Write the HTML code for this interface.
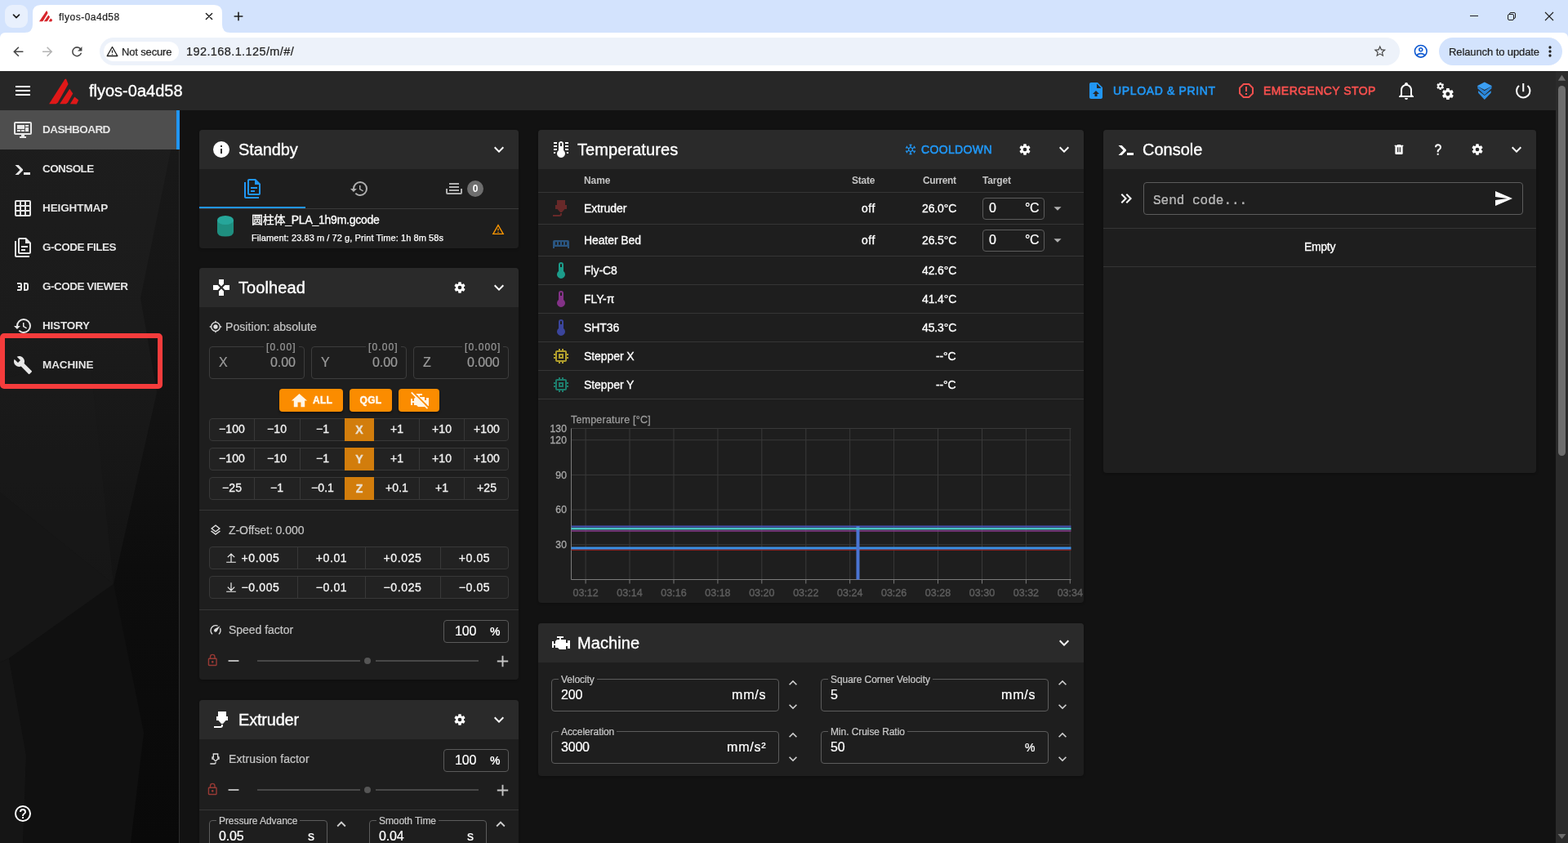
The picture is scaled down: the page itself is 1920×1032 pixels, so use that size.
<!DOCTYPE html>
<html lang="en"><head><meta charset="utf-8"><title>flyos-0a4d58</title>
<style>
*{box-sizing:border-box;margin:0;padding:0}
html,body{width:1920px;height:1032px;overflow:hidden;background:#121212}
body{font-family:"Liberation Sans","Noto Sans CJK SC",sans-serif;-webkit-font-smoothing:antialiased}
#root{position:relative;width:1920px;height:1032px;overflow:hidden;background:#121212}
.t{position:absolute;white-space:nowrap;will-change:transform}
.b{position:absolute}
.ic{position:absolute;display:block}
svg.abs{position:absolute;display:block;overflow:visible}

</style></head>
<body>
<div id="root">
<div class="b" style="left:0px;top:0px;width:1920px;height:50px;background:#d3e3fd"></div>
<div class="b" style="left:0px;top:40px;width:1920px;height:47px;background:#fff;border-radius:6px 6px 0 0"></div>
<div class="b" style="left:6px;top:6px;width:28px;height:28px;background:#e8f0fd;border-radius:9px"></div>
<svg class="abs" style="left:14px;top:14px" width="12" height="12" viewBox="0 0 12 12"><path d="M2.5 4.2 L6 7.7 L9.5 4.2" fill="none" stroke="#1f1f1f" stroke-width="1.7" stroke-linecap="round" stroke-linejoin="round"/></svg>
<svg class="abs" style="left:30px;top:6px" width="252" height="34" viewBox="0 0 252 34"><path d="M0 34 Q10 34 10 24 V10 Q10 0 20 0 H232 Q242 0 242 10 V24 Q242 34 252 34 Z" fill="#fff"/></svg>
<svg class="abs" style="left:48px;top:13.2px" width="16.2" height="13.6" viewBox="0 0 36.2 32" preserveAspectRatio="none"><g fill="#d7262c"><path d="M0.1 31.2 L19.4 1.1 L21 0.4 L23.6 7 L10.9 29.4 L8.6 31.3 Z"/><path d="M13.1 31.2 L25.3 12.8 L29.3 18.4 L23.1 29.4 L21 31.3 Z"/><path d="M25.9 31.2 L31.3 22.4 L36.2 26.5 L33.9 31.6 Z"/></g></svg>
<div class="t" style="top:11.7px;font-size:12px;line-height:18px;color:#1f1f1f;-webkit-text-stroke:0.22px #1f1f1f;letter-spacing:0.5px;font-family:'Liberation Sans',sans-serif;left:72px;">flyos-0a4d58</div>
<svg class="abs" style="left:250px;top:14px" width="12" height="12" viewBox="0 0 12 12"><path d="M2.4 2.4 L9.6 9.6 M9.6 2.4 L2.4 9.6" stroke="#1f1f1f" stroke-width="1.4" stroke-linecap="round"/></svg>
<svg class="abs" style="left:285px;top:13px" width="14" height="14" viewBox="0 0 14 14"><path d="M7 2.2 V11.8 M2.2 7 H11.8" stroke="#1f1f1f" stroke-width="1.6" stroke-linecap="round"/></svg>
<svg class="abs" style="left:1799px;top:13px" width="12" height="12" viewBox="0 0 12 12"><path d="M1 6.5 H11" stroke="#1f1f1f" stroke-width="1"/></svg>
<svg class="abs" style="left:1845px;top:14px" width="12" height="12" viewBox="0 0 12 12"><rect x="1.5" y="3.5" width="7" height="7" rx="1.5" fill="none" stroke="#1f1f1f" stroke-width="1"/><path d="M3.5 3.5 V3 Q3.5 1.5 5 1.5 H9 Q10.5 1.5 10.5 3 V7 Q10.5 8.5 9 8.5 H8.5" fill="none" stroke="#1f1f1f" stroke-width="1"/></svg>
<svg class="abs" style="left:1891px;top:14px" width="12" height="12" viewBox="0 0 12 12"><path d="M1 1 L11 11 M11 1 L1 11" stroke="#1f1f1f" stroke-width="1.1"/></svg>
<svg class="ic" style="left:12.75px;top:53.75px;width:18.5px;height:18.5px;" viewBox="0 0 24 24"><path fill="#474747" d="M20,11V13H8L13.5,18.5L12.08,19.92L4.16,12L12.08,4.08L13.5,5.5L8,11H20Z"/></svg>
<svg class="ic" style="left:48.75px;top:53.75px;width:18.5px;height:18.5px;" viewBox="0 0 24 24"><path fill="#b4b4b4" d="M4,11V13H16L10.5,18.5L11.92,19.92L19.84,12L11.92,4.08L10.5,5.5L16,11H4Z"/></svg>
<svg class="ic" style="left:84.75px;top:53.75px;width:18.5px;height:18.5px;" viewBox="0 0 24 24"><path fill="#474747" d="M17.65,6.35C16.2,4.9 14.21,4 12,4A8,8 0 0,0 4,12A8,8 0 0,0 12,20C15.73,20 18.84,17.45 19.73,14H17.65C16.83,16.33 14.61,18 12,18A6,6 0 0,1 6,12A6,6 0 0,1 12,6C13.66,6 15.14,6.69 16.22,7.78L13,11H20V4L17.65,6.35Z"/></svg>
<div class="b" style="left:122px;top:46px;width:1592px;height:34px;background:#edf2fa;border-radius:17px"></div>
<div class="b" style="left:127px;top:51px;width:92px;height:24px;background:#fff;border-radius:12px"></div>
<svg class="abs" style="left:130px;top:56px" width="15" height="14" viewBox="0 0 15 14"><path d="M7.5 1.5 L13.8 12.5 H1.2 Z" fill="none" stroke="#1f1f1f" stroke-width="1.3" stroke-linejoin="round"/><path d="M7.5 5.5 V8.8 M7.5 10.2 V11.3" stroke="#1f1f1f" stroke-width="1.3"/></svg>
<div class="t" style="top:54px;font-size:13px;line-height:20px;color:#1f1f1f;-webkit-text-stroke:0.22px #1f1f1f;letter-spacing:-0.15px;font-family:'Liberation Sans',sans-serif;left:149px;">Not secure</div>
<div class="t" style="top:52px;font-size:14.5px;line-height:22px;color:#1f1f1f;-webkit-text-stroke:0.22px #1f1f1f;letter-spacing:0.4px;font-family:'Liberation Sans',sans-serif;left:228px;">192.168.1.125/m/#/</div>
<svg class="ic" style="left:1681.25px;top:54.25px;width:17.5px;height:17.5px;" viewBox="0 0 24 24"><path fill="#474747" d="M12,15.39L8.24,17.66L9.23,13.38L5.91,10.5L10.29,10.13L12,6.09L13.71,10.13L18.09,10.5L14.77,13.38L15.76,17.66M22,9.24L14.81,8.63L12,2L9.19,8.63L2,9.24L7.45,13.97L5.82,21L12,17.27L18.18,21L16.54,13.97L22,9.24Z"/></svg>
<svg class="ic" style="left:1729.75px;top:53.05px;width:19.5px;height:19.5px;" viewBox="0 0 24 24"><path fill="#0b57d0" d="M12,2A10,10 0 0,0 2,12A10,10 0 0,0 12,22A10,10 0 0,0 22,12A10,10 0 0,0 12,2M7.07,18.28C7.5,17.38 10.12,16.5 12,16.5C13.88,16.5 16.5,17.38 16.93,18.28C15.57,19.36 13.86,20 12,20C10.14,20 8.43,19.36 7.07,18.28M18.36,16.83C16.93,15.09 13.46,14.5 12,14.5C10.54,14.5 7.07,15.09 5.64,16.83C4.62,15.5 4,13.82 4,12C4,7.59 7.59,4 12,4C16.41,4 20,7.59 20,12C20,13.82 19.38,15.5 18.36,16.83M12,6C10.06,6 8.5,7.56 8.5,9.5C8.5,11.44 10.06,13 12,13C13.94,13 15.5,11.44 15.5,9.5C15.5,7.56 13.94,6 12,6M12,11A1.5,1.5 0 0,1 10.5,9.5A1.5,1.5 0 0,1 12,8A1.5,1.5 0 0,1 13.5,9.5A1.5,1.5 0 0,1 12,11Z"/></svg>
<div class="b" style="left:1762px;top:46px;width:151px;height:34px;background:#d3e3fd;border-radius:17px"></div>
<div class="t" style="top:54px;font-size:13px;line-height:20px;color:#1f1f1f;-webkit-text-stroke:0.22px #1f1f1f;letter-spacing:-0.1px;font-family:'Liberation Sans',sans-serif;left:1774px;">Relaunch to update</div>
<svg class="ic" style="left:1888px;top:53px;width:20px;height:20px;" viewBox="0 0 24 24"><path fill="#1f1f1f" d="M12,16A2,2 0 0,1 14,18A2,2 0 0,1 12,20A2,2 0 0,1 10,18A2,2 0 0,1 12,16M12,10A2,2 0 0,1 14,12A2,2 0 0,1 12,14A2,2 0 0,1 10,12A2,2 0 0,1 12,10M12,4A2,2 0 0,1 14,6A2,2 0 0,1 12,8A2,2 0 0,1 10,6A2,2 0 0,1 12,4Z"/></svg>
<div class="b" style="left:0px;top:87px;width:1920px;height:48px;background:#272727"></div>
<svg class="ic" style="left:16px;top:99px;width:24px;height:24px;" viewBox="0 0 24 24"><path fill="#fff" d="M3,6H21V8H3V6M3,11H21V13H3V11M3,16H21V18H3V16Z"/></svg>
<svg class="abs" style="left:60px;top:95.6px" width="36.2" height="32" viewBox="0 0 36.2 32"><g fill="#e01818"><path d="M0.1 31.2 L19.4 1.1 L21 0.4 L23.6 7 L10.9 29.4 L8.6 31.3 Z"/><path d="M13.1 31.2 L25.3 12.8 L29.3 18.4 L23.1 29.4 L21 31.3 Z"/><path d="M25.9 31.2 L31.3 22.4 L36.2 26.5 L33.9 31.6 Z"/></g></svg>
<div class="t" style="top:96px;font-size:20px;line-height:30px;color:#fff;-webkit-text-stroke:0.35px #fff;left:109px;">flyos-0a4d58</div>
<svg class="ic" style="left:1330px;top:99px;width:24px;height:24px;" viewBox="0 0 24 24"><path fill="#2196f3" d="M14,2H6C4.89,2 4,2.89 4,4V20C4,21.11 4.89,22 6,22H18C19.11,22 20,21.11 20,20V8L14,2M13.5,16V19H10.5V16H8L12,12L16,16H13.5M13,9V3.5L18.5,9H13Z"/></svg>
<div class="t" style="top:100.5px;font-size:14px;line-height:21px;color:#2196f3;letter-spacing:0.64px;left:1362.5px;-webkit-text-stroke:.62px #2196f3;">UPLOAD &amp; PRINT</div>
<svg class="ic" style="left:1514px;top:99px;width:24px;height:24px;" viewBox="0 0 24 24"><path fill="#f5504e" d="M8.27,3L3,8.27V15.73L8.27,21H15.73C17.5,19.24 21,15.73 21,15.73V8.27L15.73,3M9.1,5H14.9L19,9.1V14.9L14.9,19H9.1L5,14.9V9.1M11,15H13V17H11V15M11,7H13V13H11V7"/></svg>
<div class="t" style="top:100.5px;font-size:14px;line-height:21px;color:#f5504e;letter-spacing:0.43px;left:1547px;-webkit-text-stroke:.62px #f5504e;">EMERGENCY STOP</div>
<svg class="ic" style="left:1710px;top:99px;width:24px;height:24px;" viewBox="0 0 24 24"><path fill="#fff" d="M10,21H14A2,2 0 0,1 12,23A2,2 0 0,1 10,21M21,19V20H3V19L5,17V11C5,7.9 7.03,5.17 10,4.29C10,4.19 10,4.1 10,4A2,2 0 0,1 12,2A2,2 0 0,1 14,4C14,4.1 14,4.19 14,4.29C16.97,5.17 19,7.9 19,11V17L21,19M17,11A5,5 0 0,0 12,6A5,5 0 0,0 7,11V18H17V11Z"/></svg>
<svg class="ic" style="left:1757px;top:99px;width:24px;height:24px;" viewBox="0 0 24 24"><path fill="#fff" d="M15.9,18.45C17.25,18.45 18.35,17.35 18.35,16C18.35,14.65 17.25,13.55 15.9,13.55C14.54,13.55 13.45,14.65 13.45,16C13.45,17.35 14.54,18.45 15.9,18.45M21.1,16.68L22.58,17.84C22.71,17.95 22.75,18.13 22.66,18.29L21.26,20.71C21.17,20.86 21,20.92 20.83,20.86L19.09,20.16C18.73,20.44 18.33,20.67 17.91,20.85L17.64,22.7C17.62,22.87 17.47,23 17.3,23H14.5C14.32,23 14.18,22.87 14.15,22.7L13.89,20.85C13.46,20.67 13.07,20.44 12.71,20.16L10.96,20.86C10.81,20.92 10.62,20.86 10.54,20.71L9.14,18.29C9.05,18.13 9.09,17.95 9.22,17.84L10.7,16.68L10.65,16L10.7,15.31L9.22,14.16C9.09,14.05 9.05,13.86 9.14,13.71L10.54,11.29C10.62,11.13 10.81,11.07 10.96,11.13L12.71,11.84C13.07,11.56 13.46,11.32 13.89,11.15L14.15,9.29C14.18,9.13 14.32,9 14.5,9H17.3C17.47,9 17.62,9.13 17.64,9.29L17.91,11.15C18.33,11.32 18.73,11.56 19.09,11.84L20.83,11.13C21,11.07 21.17,11.13 21.26,11.29L22.66,13.71C22.75,13.86 22.71,14.05 22.58,14.16L21.1,15.31L21.15,16L21.1,16.68M6.69,8.07C7.56,8.07 8.26,7.37 8.26,6.5C8.26,5.63 7.56,4.92 6.69,4.92A1.58,1.58 0 0,0 5.11,6.5C5.11,7.37 5.82,8.07 6.69,8.07M10.03,6.94L11,7.68C11.07,7.75 11.09,7.87 11.03,7.97L10.13,9.53C10.08,9.63 9.96,9.67 9.86,9.63L8.74,9.18L8,9.62L7.81,10.81C7.79,10.92 7.7,11 7.59,11H5.79C5.67,11 5.58,10.92 5.56,10.81L5.4,9.62L4.64,9.18L3.5,9.63C3.41,9.67 3.3,9.63 3.24,9.53L2.34,7.97C2.28,7.87 2.31,7.75 2.39,7.68L3.34,6.94L3.31,6.5L3.34,6.06L2.39,5.32C2.31,5.25 2.28,5.13 2.34,5.03L3.24,3.47C3.3,3.37 3.41,3.33 3.5,3.37L4.63,3.82L5.4,3.38L5.56,2.19C5.58,2.08 5.67,2 5.79,2H7.59C7.7,2 7.79,2.08 7.81,2.19L8,3.38L8.74,3.82L9.86,3.37C9.96,3.33 10.08,3.37 10.13,3.47L11.03,5.03C11.09,5.13 11.07,5.25 11,5.32L10.03,6.06L10.06,6.5L10.03,6.94Z"/></svg>
<svg class="abs" style="left:1806px;top:98px" width="24" height="26" viewBox="1806 98 24 26"><path d="M1810.1 113.7 L1817.8 121.9 L1825.7 113.7 L1825.7 111 L1817.8 117 L1810.1 111 Z" fill="#2f90e4"/><path d="M1809.3 108.2 L1817.8 116.2 L1826.5 108.2 L1826.5 105.5 L1817.8 111.3 L1809.3 105.5 Z" fill="#2a85d8"/><path d="M1817.8 100.5 L1827 105.3 L1817.8 110.1 L1808.7 105.3 Z" fill="#3b9ff4"/></svg>
<svg class="ic" style="left:1852.75px;top:98.95px;width:24.5px;height:24.5px;" viewBox="0 0 24 24"><path fill="#fff" d="M13,3H11V13H13V3M17.83,5.17L16.41,6.59C17.96,7.85 19,9.83 19,12A7,7 0 0,1 12,19C8.14,19 5,15.86 5,12C5,9.83 5.96,7.85 7.58,6.58L6.17,5.17C4.23,6.82 3,9.26 3,12A9,9 0 0,0 12,21A9,9 0 0,0 21,12C21,9.26 19.77,6.82 17.83,5.17Z"/></svg>
<div class="b" style="left:0px;top:135px;width:220px;height:897px;background:linear-gradient(180deg,#1d1d1d 0%,#1b1b1b 30%,#151515 55%,#111 75%,#0f0f0f 100%);border-right:1px solid #2e2e2e"></div>
<svg class="abs" style="left:0;top:135px" width="219" height="897" viewBox="0 0 219 897"><linearGradient id="sbg" x1="0" y1="0" x2="0" y2="1"><stop offset="0" stop-color="#191919"/><stop offset=".3" stop-color="#151515"/><stop offset=".62" stop-color="#0d0d0d"/><stop offset="1" stop-color="#090909"/></linearGradient><path d="M0 330 L110 300 L139 580 L0 468 Z" fill="#1b1b1b" opacity=".4"/><path d="M0 468 L139 580 L11 671 L0 676 Z" fill="#161616"/><path d="M11 671 L139 580 L176 762 L160 897 L28 897 L32 790 Z" fill="#101010"/><path d="M219 0 L172 230 L192 345 L139 580 L176 762 L160 897 L219 897 Z" fill="url(#sbg)"/><path d="M0 676 L11 671 L32 790 L28 897 L0 897 Z" fill="#151515"/></svg>
<div class="b" style="left:0px;top:135px;width:216px;height:48px;background:#4e4e4e"></div>
<div class="b" style="left:216px;top:135px;width:4px;height:48px;background:#2196f3"></div>
<svg class="ic" style="left:16px;top:147px;width:24px;height:24px;" viewBox="0 0 24 24"><path fill="#e6e6e6" d="M21,16V4H3V16H21M21,2A2,2 0 0,1 23,4V16A2,2 0 0,1 21,18H14V20H16V22H8V20H10V18H3C1.89,18 1,17.1 1,16V4C1,2.89 1.89,2 3,2H21M5,6H14V11H5V6M15,6H19V8H15V6M19,9V14H15V9H19M5,12H9V14H5V12M10,12H14V14H10V12Z"/></svg>
<div class="t" style="top:149px;font-size:13.5px;line-height:20px;color:#e4e4e4;font-weight:700;letter-spacing:-0.55px;left:52px;">DASHBOARD</div>
<svg class="ic" style="left:16px;top:195px;width:24px;height:24px;" viewBox="0 0 24 24"><path fill="#e6e6e6" d="M13,19V16H21V19H13M8.5,13L2.47,7H6.71L11.67,11.95C12.25,12.54 12.25,13.5 11.67,14.07L6.74,19H2.5L8.5,13Z"/></svg>
<div class="t" style="top:197px;font-size:13.5px;line-height:20px;color:#e4e4e4;font-weight:700;letter-spacing:-0.58px;left:52px;">CONSOLE</div>
<svg class="ic" style="left:16px;top:243px;width:24px;height:24px;" viewBox="0 0 24 24"><path fill="#e6e6e6" d="M10,4V8H14V4H10M16,4V8H20V4H16M16,10V14H20V10H16M16,16V20H20V16H16M14,20V16H10V20H14M8,20V16H4V20H8M8,14V10H4V14H8M8,8V4H4V8H8M10,14H14V10H10V14M4,2H20A2,2 0 0,1 22,4V20A2,2 0 0,1 20,22H4C2.92,22 2,21.1 2,20V4A2,2 0 0,1 4,2Z"/></svg>
<div class="t" style="top:245px;font-size:13.5px;line-height:20px;color:#e4e4e4;font-weight:700;letter-spacing:-0.1px;left:52px;">HEIGHTMAP</div>
<svg class="ic" style="left:16px;top:291px;width:24px;height:24px;" viewBox="0 0 24 24"><path fill="#e6e6e6" d="M16,0H8C6.9,0 6,0.9 6,2V18C6,19.1 6.9,20 8,20H20C21.1,20 22,19.1 22,18V6L16,0M20,18H8V2H15V7H20V18M4,4V22H20V24H4C2.9,24 2,23.1 2,22V4H4M10,10V12H18V10H10M10,14V16H15V14H10Z"/></svg>
<div class="t" style="top:293px;font-size:13.5px;line-height:20px;color:#e4e4e4;font-weight:700;letter-spacing:-0.5px;left:52px;">G-CODE FILES</div>
<svg class="ic" style="left:16px;top:339px;width:24px;height:24px;" viewBox="0 0 24 24"><path fill="#e6e6e6" d="M5,7H9A2,2 0 0,1 11,9V15A2,2 0 0,1 9,17H5V15H9V13H6V11H9V9H5V7M13,7H16A3,3 0 0,1 19,10V14A3,3 0 0,1 16,17H13V7M16,15A1,1 0 0,0 17,14V10A1,1 0 0,0 16,9H15V15H16Z"/></svg>
<div class="t" style="top:341px;font-size:13.5px;line-height:20px;color:#e4e4e4;font-weight:700;letter-spacing:-0.5px;left:52px;">G-CODE VIEWER</div>
<svg class="ic" style="left:16px;top:387px;width:24px;height:24px;" viewBox="0 0 24 24"><path fill="#e6e6e6" d="M13.5,8H12V13L16.28,15.54L17,14.33L13.5,12.25V8M13,3A9,9 0 0,0 4,12H1L4.96,16.03L9,12H6A7,7 0 0,1 13,5A7,7 0 0,1 20,12A7,7 0 0,1 13,19C11.07,19 9.32,18.21 8.06,16.94L6.64,18.36C8.27,20 10.5,21 13,21A9,9 0 0,0 22,12A9,9 0 0,0 13,3"/></svg>
<div class="t" style="top:389px;font-size:13.5px;line-height:20px;color:#e4e4e4;font-weight:700;letter-spacing:-0.2px;left:52px;">HISTORY</div>
<svg class="ic" style="left:16px;top:435px;width:24px;height:24px;" viewBox="0 0 24 24"><path fill="#e6e6e6" d="M22.7,19L13.6,9.9C14.5,7.6 14,4.9 12.1,3C10.1,1 7.1,0.6 4.7,1.7L9,6L6,9L1.6,4.7C0.4,7.1 0.9,10.1 2.9,12.1C4.8,14 7.5,14.5 9.8,13.6L18.9,22.7C19.3,23.1 19.9,23.1 20.3,22.7L22.6,20.4C23.1,20 23.1,19.3 22.7,19Z"/></svg>
<div class="t" style="top:437px;font-size:13.5px;line-height:20px;color:#e4e4e4;font-weight:700;letter-spacing:-0.1px;left:52px;">MACHINE</div>
<div class="b" style="left:0px;top:408px;width:199px;height:68px;border:6px solid #f53c3c;border-radius:5px"></div>
<svg class="ic" style="left:16px;top:984px;width:24px;height:24px;" viewBox="0 0 24 24"><path fill="#fff" d="M11,18H13V16H11V18M12,2A10,10 0 0,0 2,12A10,10 0 0,0 12,22A10,10 0 0,0 22,12A10,10 0 0,0 12,2M12,20C7.59,20 4,16.41 4,12C4,7.59 7.59,4 12,4C16.41,4 20,7.59 20,12C20,16.41 16.41,20 12,20M12,6A4,4 0 0,0 8,10H10A2,2 0 0,1 12,8A2,2 0 0,1 14,10C14,12 11,11.75 11,15H13C13,12.75 16,12.5 16,10A4,4 0 0,0 12,6Z"/></svg>
<div class="b" style="left:1905px;top:87px;width:15px;height:945px;background:#2b2b2b"></div>
<svg class="abs" style="left:1907px;top:91px" width="11" height="8" viewBox="0 0 11 8"><path d="M5.5 0.8 L10.2 7.8 H0.8 Z" fill="#6d6d6d"/></svg>
<div class="b" style="left:1908px;top:105px;width:9px;height:453px;background:#6d6d6d;border-radius:5px"></div>
<svg class="abs" style="left:1907px;top:1020px" width="11" height="8" viewBox="0 0 11 8"><path d="M5.5 7 L10.5 1 H0.5 Z" fill="#6b6b6b"/></svg>
<div class="b" style="left:244px;top:159px;width:391px;height:145px;background:#1e1e1e;border-radius:4px;box-shadow:0 1px 3px rgba(0,0,0,.28)"></div>
<div class="b" style="left:244px;top:159px;width:391px;height:48px;background:#2a2a2a;border-radius:4px 4px 0 0"></div>
<svg class="ic" style="left:259px;top:171px;width:24px;height:24px;" viewBox="0 0 24 24"><path fill="#fff" d="M13,9H11V7H13M13,17H11V11H13M12,2A10,10 0 0,0 2,12A10,10 0 0,0 12,22A10,10 0 0,0 22,12A10,10 0 0,0 12,2Z"/></svg>
<div class="t" style="top:168px;font-size:20px;line-height:30px;color:#fff;-webkit-text-stroke:0.35px #fff;letter-spacing:-0.1px;left:292px;">Standby</div>
<svg class="ic" style="left:599px;top:171px;width:24px;height:24px;" viewBox="0 0 24 24"><path fill="#fff" d="M7.41,8.58L12,13.17L16.59,8.58L18,10L12,16L6,10L7.41,8.58Z"/></svg>
<svg class="ic" style="left:297px;top:219px;width:24px;height:24px;" viewBox="0 0 24 24"><path fill="#2196f3" d="M16,0H8C6.9,0 6,0.9 6,2V18C6,19.1 6.9,20 8,20H20C21.1,20 22,19.1 22,18V6L16,0M20,18H8V2H15V7H20V18M4,4V22H20V24H4C2.9,24 2,23.1 2,22V4H4M10,10V12H18V10H10M10,14V16H15V14H10Z"/></svg>
<svg class="ic" style="left:428px;top:219px;width:24px;height:24px;" viewBox="0 0 24 24"><path fill="#b0b0b0" d="M13.5,8H12V13L16.28,15.54L17,14.33L13.5,12.25V8M13,3A9,9 0 0,0 4,12H1L4.96,16.03L9,12H6A7,7 0 0,1 13,5A7,7 0 0,1 20,12A7,7 0 0,1 13,19C11.07,19 9.32,18.21 8.06,16.94L6.64,18.36C8.27,20 10.5,21 13,21A9,9 0 0,0 22,12A9,9 0 0,0 13,3"/></svg>
<svg class="ic" style="left:544px;top:219px;width:24px;height:24px;" viewBox="0 0 24 24"><path fill="#b0b0b0" d="M18 5H6V7H18V5M6 9H18V11H6V9M2 12H4V17H20V12H22V17A2 2 0 0 1 20 19H4A2 2 0 0 1 2 17V12M18 13H6V15H18V13Z"/></svg>
<div class="b" style="left:571.5px;top:221px;width:20px;height:20px;background:#6e6e6e;border-radius:10px"></div>
<div class="t" style="top:222px;font-size:12px;line-height:18px;color:#fff;font-weight:700;left:571.5px;width:20px;text-align:center;">0</div>
<div class="b" style="left:244px;top:255px;width:391px;height:1px;background:#3a3a3a"></div>
<div class="b" style="left:244px;top:253px;width:130px;height:2px;background:#2196f3"></div>
<svg class="abs" style="left:266px;top:263px" width="20" height="28" viewBox="0 0 20 28"><path d="M0 6 V21 Q0 26.5 10 26.5 Q20 26.5 20 21 V6 Z" fill="#1f8f80"/><ellipse cx="10" cy="6.5" rx="10" ry="5.5" fill="#26a69a"/></svg>
<div class="t" style="top:258.5px;font-size:14px;line-height:21px;color:#fff;letter-spacing:-0.25px;left:308px;-webkit-text-stroke:.3px #fff;">圆柱体_PLA_1h9m.gcode</div>
<div class="t" style="top:283px;font-size:11px;line-height:16px;color:#fff;letter-spacing:0.07px;left:308px;-webkit-text-stroke:.25px #fff;">Filament: 23.83 m / 72 g, Print Time: 1h 8m 58s</div>
<svg class="ic" style="left:602px;top:273px;width:16px;height:16px;" viewBox="0 0 24 24"><path fill="#ff9800" d="M12,2L1,21H23M12,6L19.53,19H4.47M11,10V14H13V10M11,16V18H13V16"/></svg>
<div class="b" style="left:244px;top:328px;width:391px;height:504px;background:#1e1e1e;border-radius:4px;box-shadow:0 1px 3px rgba(0,0,0,.28)"></div>
<div class="b" style="left:244px;top:328px;width:391px;height:48px;background:#2a2a2a;border-radius:4px 4px 0 0"></div>
<svg class="ic" style="left:259px;top:340px;width:24px;height:24px;" viewBox="0 0 24 24"><path fill="#fff" d="M16.5,9L13.5,12L16.5,15H22V9M9,16.5V22H15V16.5L12,13.5M7.5,9H2V15H7.5L10.5,12M15,7.5V2H9V7.5L12,10.5L15,7.5Z"/></svg>
<div class="t" style="top:337px;font-size:20px;line-height:30px;color:#fff;-webkit-text-stroke:0.35px #fff;letter-spacing:0.1px;left:292px;">Toolhead</div>
<svg class="ic" style="left:555px;top:344px;width:16px;height:16px;" viewBox="0 0 24 24"><path fill="#fff" d="M12,15.5A3.5,3.5 0 0,1 8.5,12A3.5,3.5 0 0,1 12,8.5A3.5,3.5 0 0,1 15.5,12A3.5,3.5 0 0,1 12,15.5M19.43,12.97C19.47,12.65 19.5,12.33 19.5,12C19.5,11.67 19.47,11.34 19.43,11L21.54,9.37C21.73,9.22 21.78,8.95 21.66,8.73L19.66,5.27C19.54,5.05 19.27,4.96 19.05,5.05L16.56,6.05C16.04,5.66 15.5,5.32 14.87,5.07L14.5,2.42C14.46,2.18 14.25,2 14,2H10C9.75,2 9.54,2.18 9.5,2.42L9.13,5.07C8.5,5.32 7.96,5.66 7.44,6.05L4.95,5.05C4.73,4.96 4.46,5.05 4.34,5.27L2.34,8.73C2.21,8.95 2.27,9.22 2.46,9.37L4.57,11C4.53,11.34 4.5,11.67 4.5,12C4.5,12.33 4.53,12.65 4.57,12.97L2.46,14.63C2.27,14.78 2.21,15.05 2.34,15.27L4.34,18.73C4.46,18.95 4.73,19.03 4.95,18.95L7.44,17.94C7.96,18.34 8.5,18.68 9.13,18.93L9.5,21.58C9.54,21.82 9.75,22 10,22H14C14.25,22 14.46,21.82 14.5,21.58L14.87,18.93C15.5,18.67 16.04,18.34 16.56,17.94L19.05,18.95C19.27,19.03 19.54,18.95 19.66,18.73L21.66,15.27C21.78,15.05 21.73,14.78 21.54,14.63L19.43,12.97Z"/></svg>
<svg class="ic" style="left:599px;top:340px;width:24px;height:24px;" viewBox="0 0 24 24"><path fill="#fff" d="M7.41,8.58L12,13.17L16.59,8.58L18,10L12,16L6,10L7.41,8.58Z"/></svg>
<svg class="ic" style="left:256px;top:392.3px;width:16px;height:16px;" viewBox="0 0 24 24"><path fill="#e0e0e0" d="M12,8A4,4 0 0,1 16,12A4,4 0 0,1 12,16A4,4 0 0,1 8,12A4,4 0 0,1 12,8M3.05,13H1V11H3.05C3.5,6.83 6.83,3.5 11,3.05V1H13V3.05C17.17,3.5 20.5,6.83 20.95,11H23V13H20.95C20.5,17.17 17.17,20.5 13,20.95V23H11V20.95C6.83,20.5 3.5,17.17 3.05,13M12,5A7,7 0 0,0 5,12A7,7 0 0,0 12,19A7,7 0 0,0 19,12A7,7 0 0,0 12,5Z"/></svg>
<div class="t" style="top:389.5px;font-size:14px;line-height:21px;color:#c4c4c4;-webkit-text-stroke:0.22px #c4c4c4;letter-spacing:0.08px;left:276px;">Position: absolute</div>
<div class="b" style="left:256px;top:424px;width:117px;height:40px;border:1px solid #3d3d3d;border-radius:4px"></div>
<div class="t" style="top:431.8px;font-size:16px;line-height:24px;color:#9a9a9a;-webkit-text-stroke:0.22px #9a9a9a;left:268px;">X</div>
<div class="t" style="top:432px;font-size:16px;line-height:24px;color:#9a9a9a;-webkit-text-stroke:0.22px #9a9a9a;letter-spacing:-0.1px;right:1558.5px;">0.00</div>
<div class="t" style="top:417.5px;font-size:12px;line-height:14px;color:#9a9a9a;-webkit-text-stroke:0.22px #9a9a9a;letter-spacing:1.1px;right:1554px;background:#1e1e1e;padding:0 3px;">[0.00]</div>
<div class="b" style="left:381px;top:424px;width:117px;height:40px;border:1px solid #3d3d3d;border-radius:4px"></div>
<div class="t" style="top:431.8px;font-size:16px;line-height:24px;color:#9a9a9a;-webkit-text-stroke:0.22px #9a9a9a;left:393px;">Y</div>
<div class="t" style="top:432px;font-size:16px;line-height:24px;color:#9a9a9a;-webkit-text-stroke:0.22px #9a9a9a;letter-spacing:-0.1px;right:1433.5px;">0.00</div>
<div class="t" style="top:417.5px;font-size:12px;line-height:14px;color:#9a9a9a;-webkit-text-stroke:0.22px #9a9a9a;letter-spacing:1.1px;right:1429px;background:#1e1e1e;padding:0 3px;">[0.00]</div>
<div class="b" style="left:506px;top:424px;width:117px;height:40px;border:1px solid #3d3d3d;border-radius:4px"></div>
<div class="t" style="top:431.8px;font-size:16px;line-height:24px;color:#9a9a9a;-webkit-text-stroke:0.22px #9a9a9a;left:518px;">Z</div>
<div class="t" style="top:432px;font-size:16px;line-height:24px;color:#9a9a9a;-webkit-text-stroke:0.22px #9a9a9a;letter-spacing:-0.1px;right:1308.5px;">0.000</div>
<div class="t" style="top:417.5px;font-size:12px;line-height:14px;color:#9a9a9a;-webkit-text-stroke:0.22px #9a9a9a;letter-spacing:1.1px;right:1304px;background:#1e1e1e;padding:0 3px;">[0.000]</div>
<div class="b" style="left:342px;top:476px;width:78px;height:28px;background:#fb8c00;border-radius:4px;box-shadow:0 2px 3px rgba(0,0,0,.4)"></div>
<svg class="ic" style="left:354.5px;top:478.5px;width:23px;height:23px;" viewBox="0 0 24 24"><path fill="#fff5e6" d="M10,20V14H14V20H19V12H22L12,3L2,12H5V20H10Z"/></svg>
<div class="t" style="top:481px;font-size:12px;line-height:18px;color:#fff8ee;font-weight:700;letter-spacing:0.3px;left:383px;-webkit-text-stroke:.4px #fff8ee;">ALL</div>
<div class="b" style="left:428px;top:476px;width:52px;height:28px;background:#fb8c00;border-radius:4px;box-shadow:0 2px 3px rgba(0,0,0,.4)"></div>
<div class="t" style="top:481px;font-size:12px;line-height:18px;color:#fff8ee;font-weight:700;letter-spacing:0.3px;left:428px;width:52px;text-align:center;-webkit-text-stroke:.4px #fff8ee;">QGL</div>
<div class="b" style="left:488px;top:476px;width:50px;height:28px;background:#fb8c00;border-radius:4px;box-shadow:0 2px 3px rgba(0,0,0,.4)"></div>
<svg class="abs" style="left:501.6px;top:478.4px" width="24" height="24" viewBox="0 0 24 24"><path fill="#fff5e6" d="M7,4V6H10V8H7L5,10V13H3V10H1V18H3V15H5V18H8L10,20H18V16H20V19H23V9H20V12H18V8H12V6H15V4H7Z"/><path d="M3.05 1.1 L22.8 20.85" stroke="#fb8c00" stroke-width="1.9"/><path d="M1.75 2.37 L21.5 22.1" stroke="#fff5e6" stroke-width="1.8"/></svg>
<div class="b" style="left:256px;top:512px;width:367px;height:28px;border:1px solid #383838;border-radius:4px;background:#222"></div>
<div class="b" style="left:422px;top:512px;width:36px;height:28px;background:#d27d0c"></div>
<div class="t" style="top:516px;font-size:14px;line-height:21px;color:#eadfcf;font-weight:700;left:422px;width:36px;text-align:center;-webkit-text-stroke:.4px #eadfcf;">X</div>
<div class="t" style="top:514.9px;font-size:14px;line-height:21px;color:#ececec;letter-spacing:0.1px;left:255.5px;width:56px;text-align:center;-webkit-text-stroke:.3px #fff;">−100</div>
<div class="t" style="top:514.9px;font-size:14px;line-height:21px;color:#ececec;letter-spacing:0.1px;left:311px;width:56px;text-align:center;-webkit-text-stroke:.3px #fff;">−10</div>
<div class="b" style="left:311px;top:513px;width:1px;height:26px;background:#383838"></div>
<div class="t" style="top:514.9px;font-size:14px;line-height:21px;color:#ececec;letter-spacing:0.1px;left:366.5px;width:56px;text-align:center;-webkit-text-stroke:.3px #fff;">−1</div>
<div class="b" style="left:367px;top:513px;width:1px;height:26px;background:#383838"></div>
<div class="t" style="top:514.9px;font-size:14px;line-height:21px;color:#ececec;letter-spacing:0.1px;left:457.5px;width:56px;text-align:center;-webkit-text-stroke:.3px #fff;">+1</div>
<div class="t" style="top:514.9px;font-size:14px;line-height:21px;color:#ececec;letter-spacing:0.1px;left:512.5px;width:56px;text-align:center;-webkit-text-stroke:.3px #fff;">+10</div>
<div class="b" style="left:513px;top:513px;width:1px;height:26px;background:#383838"></div>
<div class="t" style="top:514.9px;font-size:14px;line-height:21px;color:#ececec;letter-spacing:0.1px;left:567.5px;width:56px;text-align:center;-webkit-text-stroke:.3px #fff;">+100</div>
<div class="b" style="left:568px;top:513px;width:1px;height:26px;background:#383838"></div>
<div class="b" style="left:256px;top:548px;width:367px;height:28px;border:1px solid #383838;border-radius:4px;background:#222"></div>
<div class="b" style="left:422px;top:548px;width:36px;height:28px;background:#d27d0c"></div>
<div class="t" style="top:552px;font-size:14px;line-height:21px;color:#eadfcf;font-weight:700;left:422px;width:36px;text-align:center;-webkit-text-stroke:.4px #eadfcf;">Y</div>
<div class="t" style="top:550.9px;font-size:14px;line-height:21px;color:#ececec;letter-spacing:0.1px;left:255.5px;width:56px;text-align:center;-webkit-text-stroke:.3px #fff;">−100</div>
<div class="t" style="top:550.9px;font-size:14px;line-height:21px;color:#ececec;letter-spacing:0.1px;left:311px;width:56px;text-align:center;-webkit-text-stroke:.3px #fff;">−10</div>
<div class="b" style="left:311px;top:549px;width:1px;height:26px;background:#383838"></div>
<div class="t" style="top:550.9px;font-size:14px;line-height:21px;color:#ececec;letter-spacing:0.1px;left:366.5px;width:56px;text-align:center;-webkit-text-stroke:.3px #fff;">−1</div>
<div class="b" style="left:367px;top:549px;width:1px;height:26px;background:#383838"></div>
<div class="t" style="top:550.9px;font-size:14px;line-height:21px;color:#ececec;letter-spacing:0.1px;left:457.5px;width:56px;text-align:center;-webkit-text-stroke:.3px #fff;">+1</div>
<div class="t" style="top:550.9px;font-size:14px;line-height:21px;color:#ececec;letter-spacing:0.1px;left:512.5px;width:56px;text-align:center;-webkit-text-stroke:.3px #fff;">+10</div>
<div class="b" style="left:513px;top:549px;width:1px;height:26px;background:#383838"></div>
<div class="t" style="top:550.9px;font-size:14px;line-height:21px;color:#ececec;letter-spacing:0.1px;left:567.5px;width:56px;text-align:center;-webkit-text-stroke:.3px #fff;">+100</div>
<div class="b" style="left:568px;top:549px;width:1px;height:26px;background:#383838"></div>
<div class="b" style="left:256px;top:584px;width:367px;height:28px;border:1px solid #383838;border-radius:4px;background:#222"></div>
<div class="b" style="left:422px;top:584px;width:36px;height:28px;background:#d27d0c"></div>
<div class="t" style="top:588px;font-size:14px;line-height:21px;color:#eadfcf;font-weight:700;left:422px;width:36px;text-align:center;-webkit-text-stroke:.4px #eadfcf;">Z</div>
<div class="t" style="top:586.9px;font-size:14px;line-height:21px;color:#ececec;letter-spacing:0.1px;left:255.5px;width:56px;text-align:center;-webkit-text-stroke:.3px #fff;">−25</div>
<div class="t" style="top:586.9px;font-size:14px;line-height:21px;color:#ececec;letter-spacing:0.1px;left:311px;width:56px;text-align:center;-webkit-text-stroke:.3px #fff;">−1</div>
<div class="b" style="left:311px;top:585px;width:1px;height:26px;background:#383838"></div>
<div class="t" style="top:586.9px;font-size:14px;line-height:21px;color:#ececec;letter-spacing:0.1px;left:366.5px;width:56px;text-align:center;-webkit-text-stroke:.3px #fff;">−0.1</div>
<div class="b" style="left:367px;top:585px;width:1px;height:26px;background:#383838"></div>
<div class="t" style="top:586.9px;font-size:14px;line-height:21px;color:#ececec;letter-spacing:0.1px;left:457.5px;width:56px;text-align:center;-webkit-text-stroke:.3px #fff;">+0.1</div>
<div class="t" style="top:586.9px;font-size:14px;line-height:21px;color:#ececec;letter-spacing:0.1px;left:512.5px;width:56px;text-align:center;-webkit-text-stroke:.3px #fff;">+1</div>
<div class="b" style="left:513px;top:585px;width:1px;height:26px;background:#383838"></div>
<div class="t" style="top:586.9px;font-size:14px;line-height:21px;color:#ececec;letter-spacing:0.1px;left:567.5px;width:56px;text-align:center;-webkit-text-stroke:.3px #fff;">+25</div>
<div class="b" style="left:568px;top:585px;width:1px;height:26px;background:#383838"></div>
<div class="b" style="left:244px;top:624px;width:391px;height:1px;background:#363636"></div>
<svg class="ic" style="left:256px;top:641px;width:16px;height:16px;" viewBox="0 0 24 24"><path fill="#e0e0e0" d="M12,18.54L19.37,12.8L21,14.07L12,21.07L3,14.07L4.62,12.81L12,18.54M12,16L3,9L12,2L21,9L12,16M12,4.53L6.26,9L12,13.47L17.74,9L12,4.53Z"/></svg>
<div class="t" style="top:638.5px;font-size:14px;line-height:21px;color:#c4c4c4;-webkit-text-stroke:0.22px #c4c4c4;letter-spacing:-0.05px;left:280px;">Z-Offset: 0.000</div>
<div class="b" style="left:256px;top:669px;width:367px;height:28px;border:1px solid #383838;border-radius:4px;background:#222"></div>
<svg class="ic" style="left:276px;top:676px;width:14px;height:14px;" viewBox="0 0 24 24"><path fill="#f2f2f2" d="M2,20V22H22V20H13V5.83L18.5,11.33L19.92,9.92L12,2L4.08,9.92L5.5,11.33L11,5.83V20H2Z"/></svg>
<div class="t" style="top:672.5px;font-size:14px;line-height:21px;color:#f2f2f2;letter-spacing:0.6px;left:284px;width:70px;text-align:center;-webkit-text-stroke:.3px #fff;">+0.005</div>
<div class="t" style="top:672.5px;font-size:14px;line-height:21px;color:#f2f2f2;letter-spacing:0.6px;left:365.5px;width:80px;text-align:center;-webkit-text-stroke:.3px #fff;">+0.01</div>
<div class="b" style="left:364px;top:670px;width:1px;height:26px;background:#383838"></div>
<div class="t" style="top:672.5px;font-size:14px;line-height:21px;color:#f2f2f2;letter-spacing:0.6px;left:453px;width:80px;text-align:center;-webkit-text-stroke:.3px #fff;">+0.025</div>
<div class="b" style="left:447px;top:670px;width:1px;height:26px;background:#383838"></div>
<div class="t" style="top:672.5px;font-size:14px;line-height:21px;color:#f2f2f2;letter-spacing:0.6px;left:541px;width:80px;text-align:center;-webkit-text-stroke:.3px #fff;">+0.05</div>
<div class="b" style="left:539px;top:670px;width:1px;height:26px;background:#383838"></div>
<div class="b" style="left:256px;top:705px;width:367px;height:28px;border:1px solid #383838;border-radius:4px;background:#222"></div>
<svg class="ic" style="left:276px;top:712px;width:14px;height:14px;" viewBox="0 0 24 24"><path fill="#f2f2f2" d="M19.92,12.08L12,20L4.08,12.08L5.5,10.67L11,16.17V2H13V16.17L18.5,10.66L19.92,12.08M12,20H2V22H22V20H12Z"/></svg>
<div class="t" style="top:708.5px;font-size:14px;line-height:21px;color:#f2f2f2;letter-spacing:0.6px;left:284px;width:70px;text-align:center;-webkit-text-stroke:.3px #fff;">−0.005</div>
<div class="t" style="top:708.5px;font-size:14px;line-height:21px;color:#f2f2f2;letter-spacing:0.6px;left:365.5px;width:80px;text-align:center;-webkit-text-stroke:.3px #fff;">−0.01</div>
<div class="b" style="left:364px;top:706px;width:1px;height:26px;background:#383838"></div>
<div class="t" style="top:708.5px;font-size:14px;line-height:21px;color:#f2f2f2;letter-spacing:0.6px;left:453px;width:80px;text-align:center;-webkit-text-stroke:.3px #fff;">−0.025</div>
<div class="b" style="left:447px;top:706px;width:1px;height:26px;background:#383838"></div>
<div class="t" style="top:708.5px;font-size:14px;line-height:21px;color:#f2f2f2;letter-spacing:0.6px;left:541px;width:80px;text-align:center;-webkit-text-stroke:.3px #fff;">−0.05</div>
<div class="b" style="left:539px;top:706px;width:1px;height:26px;background:#383838"></div>
<div class="b" style="left:244px;top:746px;width:391px;height:1px;background:#363636"></div>
<svg class="ic" style="left:256px;top:763px;width:16px;height:16px;" viewBox="0 0 24 24"><path fill="#e0e0e0" d="M12,16A3,3 0 0,1 9,13C9,11.88 9.61,10.9 10.5,10.39L20.21,4.77L14.68,14.35C14.18,15.33 13.17,16 12,16M12,3C13.81,3 15.5,3.5 16.97,4.32L14.87,5.53C14,5.19 13,5 12,5A8,8 0 0,0 4,13C4,15.21 4.89,17.21 6.34,18.65H6.35C6.74,19.04 6.74,19.67 6.35,20.06C5.96,20.45 5.32,20.45 4.93,20.07V20.07C3.12,18.26 2,15.76 2,13A10,10 0 0,1 12,3M22,13C22,15.76 20.88,18.26 19.07,20.07V20.07C18.68,20.45 18.05,20.45 17.66,20.06C17.27,19.67 17.27,19.04 17.66,18.65V18.65C19.11,17.2 20,15.21 20,13C20,12 19.81,11 19.46,10.1L20.67,8C21.5,9.5 22,11.18 22,13Z"/></svg>
<div class="t" style="top:760.5px;font-size:14px;line-height:21px;color:#c4c4c4;-webkit-text-stroke:0.22px #c4c4c4;letter-spacing:-0.03px;left:280px;">Speed factor</div>
<div class="b" style="left:543px;top:759px;width:80px;height:28px;border:1px solid #5a5a5a;border-radius:4px"></div>
<div class="t" style="top:761px;font-size:16px;line-height:24px;color:#fff;-webkit-text-stroke:0.22px #fff;letter-spacing:-0.2px;right:1337px;">100</div>
<div class="t" style="top:762.5px;font-size:14px;line-height:21px;color:#fff;font-weight:700;right:1308px;">%</div>
<svg class="ic" style="left:251.75px;top:800.25px;width:16.5px;height:16.5px;" viewBox="0 0 24 24"><path fill="#993a35" d="M12,17C10.89,17 10,16.1 10,15C10,13.89 10.89,13 12,13A2,2 0 0,1 14,15A2,2 0 0,1 12,17M18,20V10H6V20H18M18,8A2,2 0 0,1 20,10V20A2,2 0 0,1 18,22H6C4.89,22 4,21.1 4,20V10C4,8.89 4.89,8 6,8H7V6A5,5 0 0,1 12,1A5,5 0 0,1 17,6V8H18M12,3A3,3 0 0,0 9,6V8H15V6A3,3 0 0,0 12,3Z"/></svg>
<svg class="ic" style="left:275px;top:798px;width:22px;height:22px;" viewBox="0 0 24 24"><path fill="#c4c4c4" d="M19,13H5V11H19V13Z"/></svg>
<div class="b" style="left:315px;top:808px;width:126px;height:2px;background:#484848"></div>
<div class="b" style="left:460px;top:808px;width:126px;height:2px;background:#484848"></div>
<div class="b" style="left:446px;top:805px;width:8px;height:8px;background:#555;border-radius:4px"></div>
<svg class="ic" style="left:603.5px;top:797.5px;width:23px;height:23px;" viewBox="0 0 24 24"><path fill="#c4c4c4" d="M19,13H13V19H11V13H5V11H11V5H13V11H19V13Z"/></svg>
<div class="b" style="left:244px;top:857px;width:391px;height:200px;background:#1e1e1e;border-radius:4px 4px 0 0;box-shadow:0 1px 3px rgba(0,0,0,.28)"></div>
<div class="b" style="left:244px;top:857px;width:391px;height:48px;background:#2a2a2a;border-radius:4px 4px 0 0"></div>
<svg class="ic" style="left:260px;top:868.6px;width:24px;height:24px;" viewBox="0 0 24 24"><path fill="#fff" d="M7,2H17V8H19V13H16.5L13,17H11L7.5,13H5V8H7V2M10,22H2V20H10A1,1 0 0,0 11,19V18H13V19A3,3 0 0,1 10,22Z"/></svg>
<div class="t" style="top:866px;font-size:20px;line-height:30px;color:#fff;-webkit-text-stroke:0.35px #fff;letter-spacing:-0.2px;left:292px;">Extruder</div>
<svg class="ic" style="left:555px;top:873px;width:16px;height:16px;" viewBox="0 0 24 24"><path fill="#fff" d="M12,15.5A3.5,3.5 0 0,1 8.5,12A3.5,3.5 0 0,1 12,8.5A3.5,3.5 0 0,1 15.5,12A3.5,3.5 0 0,1 12,15.5M19.43,12.97C19.47,12.65 19.5,12.33 19.5,12C19.5,11.67 19.47,11.34 19.43,11L21.54,9.37C21.73,9.22 21.78,8.95 21.66,8.73L19.66,5.27C19.54,5.05 19.27,4.96 19.05,5.05L16.56,6.05C16.04,5.66 15.5,5.32 14.87,5.07L14.5,2.42C14.46,2.18 14.25,2 14,2H10C9.75,2 9.54,2.18 9.5,2.42L9.13,5.07C8.5,5.32 7.96,5.66 7.44,6.05L4.95,5.05C4.73,4.96 4.46,5.05 4.34,5.27L2.34,8.73C2.21,8.95 2.27,9.22 2.46,9.37L4.57,11C4.53,11.34 4.5,11.67 4.5,12C4.5,12.33 4.53,12.65 4.57,12.97L2.46,14.63C2.27,14.78 2.21,15.05 2.34,15.27L4.34,18.73C4.46,18.95 4.73,19.03 4.95,18.95L7.44,17.94C7.96,18.34 8.5,18.68 9.13,18.93L9.5,21.58C9.54,21.82 9.75,22 10,22H14C14.25,22 14.46,21.82 14.5,21.58L14.87,18.93C15.5,18.67 16.04,18.34 16.56,17.94L19.05,18.95C19.27,19.03 19.54,18.95 19.66,18.73L21.66,15.27C21.78,15.05 21.73,14.78 21.54,14.63L19.43,12.97Z"/></svg>
<svg class="ic" style="left:599px;top:869px;width:24px;height:24px;" viewBox="0 0 24 24"><path fill="#fff" d="M7.41,8.58L12,13.17L16.59,8.58L18,10L12,16L6,10L7.41,8.58Z"/></svg>
<svg class="ic" style="left:256px;top:921px;width:16px;height:16px;" viewBox="0 0 24 24"><path fill="#e0e0e0" d="M7,2H17V8H19V13H16.5L13,17H11L7.5,13H5V8H7V2ZM9,4V10H7V11H8.4L11.9,15H12.1L15.6,11H17V10H15V4H9ZM10,22H2V20H10A1,1 0 0,0 11,19V18H13V19A3,3 0 0,1 10,22Z"/></svg>
<div class="t" style="top:918.5px;font-size:14px;line-height:21px;color:#c4c4c4;-webkit-text-stroke:0.22px #c4c4c4;letter-spacing:0.09px;left:280px;">Extrusion factor</div>
<div class="b" style="left:543px;top:917px;width:80px;height:28px;border:1px solid #5a5a5a;border-radius:4px"></div>
<div class="t" style="top:919px;font-size:16px;line-height:24px;color:#fff;-webkit-text-stroke:0.22px #fff;letter-spacing:-0.2px;right:1337px;">100</div>
<div class="t" style="top:920.5px;font-size:14px;line-height:21px;color:#fff;font-weight:700;right:1308px;">%</div>
<svg class="ic" style="left:251.75px;top:958.25px;width:16.5px;height:16.5px;" viewBox="0 0 24 24"><path fill="#993a35" d="M12,17C10.89,17 10,16.1 10,15C10,13.89 10.89,13 12,13A2,2 0 0,1 14,15A2,2 0 0,1 12,17M18,20V10H6V20H18M18,8A2,2 0 0,1 20,10V20A2,2 0 0,1 18,22H6C4.89,22 4,21.1 4,20V10C4,8.89 4.89,8 6,8H7V6A5,5 0 0,1 12,1A5,5 0 0,1 17,6V8H18M12,3A3,3 0 0,0 9,6V8H15V6A3,3 0 0,0 12,3Z"/></svg>
<svg class="ic" style="left:275px;top:956px;width:22px;height:22px;" viewBox="0 0 24 24"><path fill="#c4c4c4" d="M19,13H5V11H19V13Z"/></svg>
<div class="b" style="left:315px;top:966px;width:126px;height:2px;background:#484848"></div>
<div class="b" style="left:460px;top:966px;width:126px;height:2px;background:#484848"></div>
<div class="b" style="left:446px;top:963px;width:8px;height:8px;background:#555;border-radius:4px"></div>
<svg class="ic" style="left:603.5px;top:955.5px;width:23px;height:23px;" viewBox="0 0 24 24"><path fill="#c4c4c4" d="M19,13H13V19H11V13H5V11H11V5H13V11H19V13Z"/></svg>
<div class="b" style="left:244px;top:991px;width:391px;height:1px;background:#363636"></div>
<div class="b" style="left:256px;top:1004px;width:145px;height:40px;border:1px solid #5c5c5c;border-radius:4px"></div>
<div class="t" style="top:998px;font-size:12px;line-height:14px;color:#c8c8c8;-webkit-text-stroke:0.22px #c8c8c8;letter-spacing:-0.07px;left:265px;background:#1e1e1e;padding:0 3px;">Pressure Advance</div>
<div class="t" style="top:1012px;font-size:16px;line-height:24px;color:#fff;-webkit-text-stroke:0.22px #fff;letter-spacing:-0.2px;left:268px;">0.05</div>
<div class="t" style="top:1012px;font-size:16px;line-height:24px;color:#fff;-webkit-text-stroke:0.22px #fff;right:1535px;">s</div>
<svg class="ic" style="left:407px;top:998px;width:22px;height:22px;" viewBox="0 0 24 24"><path fill="#d0d0d0" d="M7.41,15.41L12,10.83L16.59,15.41L18,14L12,8L6,14L7.41,15.41Z"/></svg>
<div class="b" style="left:452px;top:1004px;width:144px;height:40px;border:1px solid #5c5c5c;border-radius:4px"></div>
<div class="t" style="top:998px;font-size:12px;line-height:14px;color:#c8c8c8;-webkit-text-stroke:0.22px #c8c8c8;letter-spacing:-0.07px;left:461px;background:#1e1e1e;padding:0 3px;">Smooth Time</div>
<div class="t" style="top:1012px;font-size:16px;line-height:24px;color:#fff;-webkit-text-stroke:0.22px #fff;letter-spacing:-0.2px;left:464px;">0.04</div>
<div class="t" style="top:1012px;font-size:16px;line-height:24px;color:#fff;-webkit-text-stroke:0.22px #fff;right:1340px;">s</div>
<svg class="ic" style="left:602px;top:998px;width:22px;height:22px;" viewBox="0 0 24 24"><path fill="#d0d0d0" d="M7.41,15.41L12,10.83L16.59,15.41L18,14L12,8L6,14L7.41,15.41Z"/></svg>
<div class="b" style="left:659px;top:159px;width:668px;height:579px;background:#1e1e1e;border-radius:4px;box-shadow:0 1px 3px rgba(0,0,0,.28)"></div>
<div class="b" style="left:659px;top:159px;width:668px;height:48px;background:#2a2a2a;border-radius:4px 4px 0 0"></div>
<svg class="ic" style="left:675px;top:171px;width:24px;height:24px;" viewBox="0 0 24 24"><path fill="#fff" d="M17,3H21V5H17V3M17,7H21V9H17V7M17,11H21V13H17.75L17,12.1V11M21,15V17H19C19,16.31 18.9,15.63 18.71,15H21M7,3V5H3V3H7M7,7V9H3V7H7M7,11V12.1L6.25,13H3V11H7M3,15H5.29C5.1,15.63 5,16.31 5,17H3V15M15,13V5C15,3.34 13.66,2 12,2C10.34,2 9,3.34 9,5V13C6.79,14.66 6.34,17.79 8,20C9.66,22.21 12.79,22.66 15,21C17.21,19.34 17.66,16.21 16,14C15.72,13.62 15.38,13.28 15,13M12,4C12.55,4 13,4.45 13,5V8H11V5C11,4.45 11.45,4 12,4Z"/></svg>
<div class="t" style="top:168px;font-size:20px;line-height:30px;color:#fff;-webkit-text-stroke:0.35px #fff;letter-spacing:0.08px;left:707px;">Temperatures</div>
<svg class="ic" style="left:1106.5px;top:175px;width:16px;height:16px;" viewBox="0 0 24 24"><path fill="#2196f3" d="M20.79,13.95L18.46,14.57L16.46,13.44V10.56L18.46,9.43L20.79,10.05L21.31,8.12L19.54,7.65L20,5.88L18.07,5.36L17.45,7.69L15.45,8.82L13,7.38V5.12L14.71,3.41L13.29,2L12,3.29L10.71,2L9.29,3.41L11,5.12V7.38L8.5,8.82L6.5,7.69L5.92,5.36L4,5.88L4.47,7.65L2.7,8.12L3.22,10.05L5.55,9.43L7.55,10.56V13.45L5.55,14.58L3.22,13.96L2.7,15.89L4.47,16.36L4,18.12L5.93,18.64L6.55,16.31L8.55,15.18L11,16.62V18.88L9.29,20.59L10.71,22L12,20.71L13.29,22L14.7,20.59L13,18.88V16.62L15.5,15.17L17.5,16.3L18.12,18.63L20,18.12L19.53,16.35L21.3,15.88L20.79,13.95M9.5,10.56L12,9.11L14.5,10.56V13.44L12,14.89L9.5,13.44V10.56Z"/></svg>
<div class="t" style="top:172.5px;font-size:14px;line-height:21px;color:#2196f3;letter-spacing:0.36px;left:1128px;-webkit-text-stroke:.62px #2196f3;">COOLDOWN</div>
<svg class="ic" style="left:1247px;top:175px;width:16px;height:16px;" viewBox="0 0 24 24"><path fill="#fff" d="M12,15.5A3.5,3.5 0 0,1 8.5,12A3.5,3.5 0 0,1 12,8.5A3.5,3.5 0 0,1 15.5,12A3.5,3.5 0 0,1 12,15.5M19.43,12.97C19.47,12.65 19.5,12.33 19.5,12C19.5,11.67 19.47,11.34 19.43,11L21.54,9.37C21.73,9.22 21.78,8.95 21.66,8.73L19.66,5.27C19.54,5.05 19.27,4.96 19.05,5.05L16.56,6.05C16.04,5.66 15.5,5.32 14.87,5.07L14.5,2.42C14.46,2.18 14.25,2 14,2H10C9.75,2 9.54,2.18 9.5,2.42L9.13,5.07C8.5,5.32 7.96,5.66 7.44,6.05L4.95,5.05C4.73,4.96 4.46,5.05 4.34,5.27L2.34,8.73C2.21,8.95 2.27,9.22 2.46,9.37L4.57,11C4.53,11.34 4.5,11.67 4.5,12C4.5,12.33 4.53,12.65 4.57,12.97L2.46,14.63C2.27,14.78 2.21,15.05 2.34,15.27L4.34,18.73C4.46,18.95 4.73,19.03 4.95,18.95L7.44,17.94C7.96,18.34 8.5,18.68 9.13,18.93L9.5,21.58C9.54,21.82 9.75,22 10,22H14C14.25,22 14.46,21.82 14.5,21.58L14.87,18.93C15.5,18.67 16.04,18.34 16.56,17.94L19.05,18.95C19.27,19.03 19.54,18.95 19.66,18.73L21.66,15.27C21.78,15.05 21.73,14.78 21.54,14.63L19.43,12.97Z"/></svg>
<svg class="ic" style="left:1291px;top:171px;width:24px;height:24px;" viewBox="0 0 24 24"><path fill="#fff" d="M7.41,8.58L12,13.17L16.59,8.58L18,10L12,16L6,10L7.41,8.58Z"/></svg>
<div class="t" style="top:212px;font-size:12px;line-height:18px;color:#c4c4c4;font-weight:700;letter-spacing:-0.05px;left:715px;">Name</div>
<div class="t" style="top:212px;font-size:12px;line-height:18px;color:#c4c4c4;font-weight:700;letter-spacing:-0.2px;right:849px;">State</div>
<div class="t" style="top:212px;font-size:12px;line-height:18px;color:#c4c4c4;font-weight:700;letter-spacing:-0.4px;right:749px;">Current</div>
<div class="t" style="top:212px;font-size:12px;line-height:18px;color:#c4c4c4;font-weight:700;letter-spacing:-0.15px;left:1203px;">Target</div>
<div class="b" style="left:659px;top:235px;width:668px;height:1px;background:#353535"></div>
<div class="b" style="left:659px;top:274px;width:668px;height:1px;background:#353535"></div>
<div class="b" style="left:659px;top:313px;width:668px;height:1px;background:#353535"></div>
<div class="b" style="left:659px;top:348px;width:668px;height:1px;background:#353535"></div>
<div class="b" style="left:659px;top:383px;width:668px;height:1px;background:#353535"></div>
<div class="b" style="left:659px;top:418px;width:668px;height:1px;background:#353535"></div>
<div class="b" style="left:659px;top:453px;width:668px;height:1px;background:#353535"></div>
<div class="b" style="left:659px;top:488px;width:668px;height:1px;background:#353535"></div>
<svg class="ic" style="left:675px;top:243px;width:24px;height:24px;" viewBox="0 0 24 24"><path fill="#682929" d="M7,2H17V8H19V13H16.5L13,17H11L7.5,13H5V8H7V2M10,22H2V20H10A1,1 0 0,0 11,19V18H13V19A3,3 0 0,1 10,22Z"/></svg>
<div class="t" style="top:244.5px;font-size:14px;line-height:21px;color:#fff;letter-spacing:-0.08px;left:715px;-webkit-text-stroke:.3px #fff;">Extruder</div>
<div class="t" style="top:244.5px;font-size:14px;line-height:21px;color:#fff;letter-spacing:0.5px;right:848.5px;-webkit-text-stroke:.3px #fff;">off</div>
<div class="t" style="top:244.5px;font-size:14px;line-height:21px;color:#fff;letter-spacing:-0.12px;right:749px;-webkit-text-stroke:.3px #fff;">26.0°C</div>
<div class="b" style="left:1203px;top:241.5px;width:76px;height:27px;border:1px solid #5c5c5c;border-radius:4px"></div>
<div class="t" style="top:242.5px;font-size:16px;line-height:24px;color:#fff;-webkit-text-stroke:0.22px #fff;left:1211px;">0</div>
<div class="t" style="top:242.5px;font-size:16px;line-height:24px;color:#fff;-webkit-text-stroke:0.22px #fff;letter-spacing:-0.5px;right:648px;">°C</div>
<svg class="ic" style="left:1284px;top:244px;width:22px;height:22px;" viewBox="0 0 24 24"><path fill="#b0b0b0" d="M7,10L12,15L17,10H7Z"/></svg>
<svg class="ic" style="left:675px;top:282px;width:24px;height:24px;" viewBox="0 0 24 24"><path fill="#2a5580" d="M2,22V14A2,2 0 0,1 4,12H20A2,2 0 0,1 22,14V22H20V20H4V22H2M6,14A1,1 0 0,0 5,15V17A1,1 0 0,0 6,18A1,1 0 0,0 7,17V15A1,1 0 0,0 6,14M10,14A1,1 0 0,0 9,15V17A1,1 0 0,0 10,18A1,1 0 0,0 11,17V15A1,1 0 0,0 10,14M14,14A1,1 0 0,0 13,15V17A1,1 0 0,0 14,18A1,1 0 0,0 15,17V15A1,1 0 0,0 14,14M18,14A1,1 0 0,0 17,15V17A1,1 0 0,0 18,18A1,1 0 0,0 19,17V15A1,1 0 0,0 18,14Z"/></svg>
<div class="t" style="top:283.5px;font-size:14px;line-height:21px;color:#fff;letter-spacing:-0.08px;left:715px;-webkit-text-stroke:.3px #fff;">Heater Bed</div>
<div class="t" style="top:283.5px;font-size:14px;line-height:21px;color:#fff;letter-spacing:0.5px;right:848.5px;-webkit-text-stroke:.3px #fff;">off</div>
<div class="t" style="top:283.5px;font-size:14px;line-height:21px;color:#fff;letter-spacing:-0.12px;right:749px;-webkit-text-stroke:.3px #fff;">26.5°C</div>
<div class="b" style="left:1203px;top:280.5px;width:76px;height:27px;border:1px solid #5c5c5c;border-radius:4px"></div>
<div class="t" style="top:281.5px;font-size:16px;line-height:24px;color:#fff;-webkit-text-stroke:0.22px #fff;left:1211px;">0</div>
<div class="t" style="top:281.5px;font-size:16px;line-height:24px;color:#fff;-webkit-text-stroke:0.22px #fff;letter-spacing:-0.5px;right:648px;">°C</div>
<svg class="ic" style="left:1284px;top:283px;width:22px;height:22px;" viewBox="0 0 24 24"><path fill="#b0b0b0" d="M7,10L12,15L17,10H7Z"/></svg>
<svg class="ic" style="left:675px;top:319px;width:24px;height:24px;" viewBox="0 0 24 24"><path fill="#1c9c8a" d="M15,13V5A3,3 0 0,0 9,5V13A5,5 0 1,0 15,13M12,4A1,1 0 0,1 13,5V8H11V5A1,1 0 0,1 12,4Z"/></svg>
<div class="t" style="top:320.5px;font-size:14px;line-height:21px;color:#fff;letter-spacing:-0.08px;left:715px;-webkit-text-stroke:.3px #fff;">Fly-C8</div>
<div class="t" style="top:320.5px;font-size:14px;line-height:21px;color:#fff;letter-spacing:-0.12px;right:749px;-webkit-text-stroke:.3px #fff;">42.6°C</div>
<svg class="ic" style="left:675px;top:354px;width:24px;height:24px;" viewBox="0 0 24 24"><path fill="#833287" d="M15,13V5A3,3 0 0,0 9,5V13A5,5 0 1,0 15,13M12,4A1,1 0 0,1 13,5V8H11V5A1,1 0 0,1 12,4Z"/></svg>
<div class="t" style="top:355.5px;font-size:14px;line-height:21px;color:#fff;letter-spacing:-0.08px;left:715px;-webkit-text-stroke:.3px #fff;">FLY-π</div>
<div class="t" style="top:355.5px;font-size:14px;line-height:21px;color:#fff;letter-spacing:-0.12px;right:749px;-webkit-text-stroke:.3px #fff;">41.4°C</div>
<svg class="ic" style="left:675px;top:389px;width:24px;height:24px;" viewBox="0 0 24 24"><path fill="#3b459c" d="M15,13V5A3,3 0 0,0 9,5V13A5,5 0 1,0 15,13M12,4A1,1 0 0,1 13,5V8H11V5A1,1 0 0,1 12,4Z"/></svg>
<div class="t" style="top:390.5px;font-size:14px;line-height:21px;color:#fff;letter-spacing:-0.08px;left:715px;-webkit-text-stroke:.3px #fff;">SHT36</div>
<div class="t" style="top:390.5px;font-size:14px;line-height:21px;color:#fff;letter-spacing:-0.12px;right:749px;-webkit-text-stroke:.3px #fff;">45.3°C</div>
<svg class="ic" style="left:675px;top:424px;width:24px;height:24px;" viewBox="0 0 24 24"><path fill="#b09e2c" d="M17,17H7V7H17M21,11V9H19V7C19,5.89 18.1,5 17,5H15V3H13V5H11V3H9V5H7C5.89,5 5,5.89 5,7V9H3V11H5V13H3V15H5V17A2,2 0 0,0 7,19H9V21H11V19H13V21H15V19H17A2,2 0 0,0 19,17V15H21V13H19V11M13,13H11V11H13M15,9H9V15H15V9Z"/></svg>
<div class="t" style="top:425.5px;font-size:14px;line-height:21px;color:#fff;letter-spacing:-0.08px;left:715px;-webkit-text-stroke:.3px #fff;">Stepper X</div>
<div class="t" style="top:425.5px;font-size:14px;line-height:21px;color:#fff;letter-spacing:-0.12px;right:749px;-webkit-text-stroke:.3px #fff;">--°C</div>
<svg class="ic" style="left:675px;top:459px;width:24px;height:24px;" viewBox="0 0 24 24"><path fill="#1d7c6c" d="M17,17H7V7H17M21,11V9H19V7C19,5.89 18.1,5 17,5H15V3H13V5H11V3H9V5H7C5.89,5 5,5.89 5,7V9H3V11H5V13H3V15H5V17A2,2 0 0,0 7,19H9V21H11V19H13V21H15V19H17A2,2 0 0,0 19,17V15H21V13H19V11M13,13H11V11H13M15,9H9V15H15V9Z"/></svg>
<div class="t" style="top:460.5px;font-size:14px;line-height:21px;color:#fff;letter-spacing:-0.08px;left:715px;-webkit-text-stroke:.3px #fff;">Stepper Y</div>
<div class="t" style="top:460.5px;font-size:14px;line-height:21px;color:#fff;letter-spacing:-0.12px;right:749px;-webkit-text-stroke:.3px #fff;">--°C</div>
<svg class="abs" style="left:660px;top:489px;will-change:transform" width="667" height="249" viewBox="660 489 667 249" font-family="Liberation Sans, sans-serif"><line x1="699.5" x2="1311.5" y1="524.5" y2="524.5" stroke="#393939" stroke-width="1"/><text x="694" y="528.8" fill="#a6a6a6" stroke="#a6a6a6" stroke-width=".35" font-size="12" text-anchor="end" letter-spacing="0.15">130</text><line x1="699.5" x2="1311.5" y1="538.7" y2="538.7" stroke="#393939" stroke-width="1"/><text x="694" y="543.0" fill="#a6a6a6" stroke="#a6a6a6" stroke-width=".35" font-size="12" text-anchor="end" letter-spacing="0.15">120</text><line x1="699.5" x2="1311.5" y1="581.4" y2="581.4" stroke="#393939" stroke-width="1"/><text x="694" y="585.7" fill="#a6a6a6" stroke="#a6a6a6" stroke-width=".35" font-size="12" text-anchor="end" letter-spacing="0.15">90</text><line x1="699.5" x2="1311.5" y1="624.1" y2="624.1" stroke="#393939" stroke-width="1"/><text x="694" y="628.4" fill="#a6a6a6" stroke="#a6a6a6" stroke-width=".35" font-size="12" text-anchor="end" letter-spacing="0.15">60</text><line x1="699.5" x2="1311.5" y1="666.8" y2="666.8" stroke="#393939" stroke-width="1"/><text x="694" y="671.1" fill="#a6a6a6" stroke="#a6a6a6" stroke-width=".35" font-size="12" text-anchor="end" letter-spacing="0.15">30</text><line x1="717.1" x2="717.1" y1="524.5" y2="709.5" stroke="#393939" stroke-width="1"/><line x1="717.1" x2="717.1" y1="709.5" y2="714.5" stroke="#7a7a7a" stroke-width="1"/><text x="717.1" y="729.8" fill="#5e5e5e" stroke="#5e5e5e" stroke-width=".4" font-size="12.5" text-anchor="middle" letter-spacing="0">03:12</text><line x1="771.0" x2="771.0" y1="524.5" y2="709.5" stroke="#393939" stroke-width="1"/><line x1="771.0" x2="771.0" y1="709.5" y2="714.5" stroke="#7a7a7a" stroke-width="1"/><text x="771.0" y="729.8" fill="#5e5e5e" stroke="#5e5e5e" stroke-width=".4" font-size="12.5" text-anchor="middle" letter-spacing="0">03:14</text><line x1="825.0" x2="825.0" y1="524.5" y2="709.5" stroke="#393939" stroke-width="1"/><line x1="825.0" x2="825.0" y1="709.5" y2="714.5" stroke="#7a7a7a" stroke-width="1"/><text x="825.0" y="729.8" fill="#5e5e5e" stroke="#5e5e5e" stroke-width=".4" font-size="12.5" text-anchor="middle" letter-spacing="0">03:16</text><line x1="878.9" x2="878.9" y1="524.5" y2="709.5" stroke="#393939" stroke-width="1"/><line x1="878.9" x2="878.9" y1="709.5" y2="714.5" stroke="#7a7a7a" stroke-width="1"/><text x="878.9" y="729.8" fill="#5e5e5e" stroke="#5e5e5e" stroke-width=".4" font-size="12.5" text-anchor="middle" letter-spacing="0">03:18</text><line x1="932.8" x2="932.8" y1="524.5" y2="709.5" stroke="#393939" stroke-width="1"/><line x1="932.8" x2="932.8" y1="709.5" y2="714.5" stroke="#7a7a7a" stroke-width="1"/><text x="932.8" y="729.8" fill="#5e5e5e" stroke="#5e5e5e" stroke-width=".4" font-size="12.5" text-anchor="middle" letter-spacing="0">03:20</text><line x1="986.8" x2="986.8" y1="524.5" y2="709.5" stroke="#393939" stroke-width="1"/><line x1="986.8" x2="986.8" y1="709.5" y2="714.5" stroke="#7a7a7a" stroke-width="1"/><text x="986.8" y="729.8" fill="#5e5e5e" stroke="#5e5e5e" stroke-width=".4" font-size="12.5" text-anchor="middle" letter-spacing="0">03:22</text><line x1="1040.7" x2="1040.7" y1="524.5" y2="709.5" stroke="#393939" stroke-width="1"/><line x1="1040.7" x2="1040.7" y1="709.5" y2="714.5" stroke="#7a7a7a" stroke-width="1"/><text x="1040.7" y="729.8" fill="#5e5e5e" stroke="#5e5e5e" stroke-width=".4" font-size="12.5" text-anchor="middle" letter-spacing="0">03:24</text><line x1="1094.6" x2="1094.6" y1="524.5" y2="709.5" stroke="#393939" stroke-width="1"/><line x1="1094.6" x2="1094.6" y1="709.5" y2="714.5" stroke="#7a7a7a" stroke-width="1"/><text x="1094.6" y="729.8" fill="#5e5e5e" stroke="#5e5e5e" stroke-width=".4" font-size="12.5" text-anchor="middle" letter-spacing="0">03:26</text><line x1="1148.5" x2="1148.5" y1="524.5" y2="709.5" stroke="#393939" stroke-width="1"/><line x1="1148.5" x2="1148.5" y1="709.5" y2="714.5" stroke="#7a7a7a" stroke-width="1"/><text x="1148.5" y="729.8" fill="#5e5e5e" stroke="#5e5e5e" stroke-width=".4" font-size="12.5" text-anchor="middle" letter-spacing="0">03:28</text><line x1="1202.5" x2="1202.5" y1="524.5" y2="709.5" stroke="#393939" stroke-width="1"/><line x1="1202.5" x2="1202.5" y1="709.5" y2="714.5" stroke="#7a7a7a" stroke-width="1"/><text x="1202.5" y="729.8" fill="#5e5e5e" stroke="#5e5e5e" stroke-width=".4" font-size="12.5" text-anchor="middle" letter-spacing="0">03:30</text><line x1="1256.4" x2="1256.4" y1="524.5" y2="709.5" stroke="#393939" stroke-width="1"/><line x1="1256.4" x2="1256.4" y1="709.5" y2="714.5" stroke="#7a7a7a" stroke-width="1"/><text x="1256.4" y="729.8" fill="#5e5e5e" stroke="#5e5e5e" stroke-width=".4" font-size="12.5" text-anchor="middle" letter-spacing="0">03:32</text><line x1="1310.3" x2="1310.3" y1="524.5" y2="709.5" stroke="#393939" stroke-width="1"/><line x1="1310.3" x2="1310.3" y1="709.5" y2="714.5" stroke="#7a7a7a" stroke-width="1"/><text x="1310.3" y="729.8" fill="#5e5e5e" stroke="#5e5e5e" stroke-width=".4" font-size="12.5" text-anchor="middle" letter-spacing="0">03:34</text><line x1="699.5" x2="699.5" y1="524.5" y2="709.5" stroke="#7c7c7c" stroke-width="1"/><line x1="699.5" x2="1311.5" y1="709.5" y2="709.5" stroke="#7c7c7c" stroke-width="1"/><text x="699" y="517.5" fill="#9a9a9a" stroke="#9a9a9a" stroke-width=".3" font-size="12.5" letter-spacing="0.2">Temperature [°C]</text><line x1="699.5" x2="1311.5" y1="650.0" y2="650.0" stroke="#8a3a8e" stroke-width="1.6"/><line x1="699.5" x2="1311.5" y1="673.2" y2="673.2" stroke="#8b2020" stroke-width="1.4"/><line x1="699.5" x2="1311.5" y1="671.0" y2="671.0" stroke="#3d8fe6" stroke-width="3"/><line x1="699.5" x2="1311.5" y1="644.5" y2="644.5" stroke="#4556b8" stroke-width="2"/><line x1="1050.5" x2="1050.5" y1="644" y2="709.5" stroke="#4a74d2" stroke-width="4"/><line x1="699.5" x2="1311.5" y1="647.2" y2="647.2" stroke="#49c2c2" stroke-width="2.6"/></svg>
<div class="b" style="left:659px;top:763px;width:668px;height:187px;background:#1e1e1e;border-radius:4px;box-shadow:0 1px 3px rgba(0,0,0,.28)"></div>
<div class="b" style="left:659px;top:763px;width:668px;height:48px;background:#2a2a2a;border-radius:4px 4px 0 0"></div>
<svg class="ic" style="left:675px;top:775px;width:24px;height:24px;" viewBox="0 0 24 24"><path fill="#fff" d="M7,4V6H10V8H7L5,10V13H3V10H1V18H3V15H5V18H8L10,20H18V16H20V19H23V9H20V12H18V8H12V6H15V4H7Z"/></svg>
<div class="t" style="top:772px;font-size:20px;line-height:30px;color:#fff;-webkit-text-stroke:0.35px #fff;letter-spacing:0.1px;left:707px;">Machine</div>
<svg class="ic" style="left:1291px;top:775px;width:24px;height:24px;" viewBox="0 0 24 24"><path fill="#fff" d="M7.41,8.58L12,13.17L16.59,8.58L18,10L12,16L6,10L7.41,8.58Z"/></svg>
<div class="b" style="left:675px;top:831px;width:279px;height:40px;border:1px solid #5c5c5c;border-radius:4px"></div>
<div class="t" style="top:825px;font-size:12px;line-height:14px;color:#c8c8c8;-webkit-text-stroke:0.22px #c8c8c8;letter-spacing:-0.07px;left:684px;background:#1e1e1e;padding:0 3px;">Velocity</div>
<div class="t" style="top:839px;font-size:16px;line-height:24px;color:#fff;-webkit-text-stroke:0.22px #fff;letter-spacing:-0.2px;left:687px;">200</div>
<div class="t" style="top:839px;font-size:16px;line-height:24px;color:#fff;-webkit-text-stroke:0.22px #fff;letter-spacing:0.8px;right:982px;">mm/s</div>
<div class="b" style="left:1005px;top:831px;width:279px;height:40px;border:1px solid #5c5c5c;border-radius:4px"></div>
<div class="t" style="top:825px;font-size:12px;line-height:14px;color:#c8c8c8;-webkit-text-stroke:0.22px #c8c8c8;letter-spacing:-0.07px;left:1014px;background:#1e1e1e;padding:0 3px;">Square Corner Velocity</div>
<div class="t" style="top:839px;font-size:16px;line-height:24px;color:#fff;-webkit-text-stroke:0.22px #fff;letter-spacing:-0.2px;left:1017px;">5</div>
<div class="t" style="top:839px;font-size:16px;line-height:24px;color:#fff;-webkit-text-stroke:0.22px #fff;letter-spacing:0.8px;right:652px;">mm/s</div>
<div class="b" style="left:675px;top:895px;width:279px;height:40px;border:1px solid #5c5c5c;border-radius:4px"></div>
<div class="t" style="top:889px;font-size:12px;line-height:14px;color:#c8c8c8;-webkit-text-stroke:0.22px #c8c8c8;letter-spacing:-0.07px;left:684px;background:#1e1e1e;padding:0 3px;">Acceleration</div>
<div class="t" style="top:903px;font-size:16px;line-height:24px;color:#fff;-webkit-text-stroke:0.22px #fff;letter-spacing:-0.2px;left:687px;">3000</div>
<div class="t" style="top:903px;font-size:16px;line-height:24px;color:#fff;-webkit-text-stroke:0.22px #fff;letter-spacing:0.8px;right:982px;">mm/s²</div>
<div class="b" style="left:1005px;top:895px;width:279px;height:40px;border:1px solid #5c5c5c;border-radius:4px"></div>
<div class="t" style="top:889px;font-size:12px;line-height:14px;color:#c8c8c8;-webkit-text-stroke:0.22px #c8c8c8;letter-spacing:-0.07px;left:1014px;background:#1e1e1e;padding:0 3px;">Min. Cruise Ratio</div>
<div class="t" style="top:903px;font-size:16px;line-height:24px;color:#fff;-webkit-text-stroke:0.22px #fff;letter-spacing:-0.2px;left:1017px;">50</div>
<div class="t" style="top:905px;font-size:14px;line-height:21px;color:#fff;-webkit-text-stroke:0.22px #fff;right:653px;">%</div>
<svg class="ic" style="left:961px;top:826px;width:20px;height:20px;" viewBox="0 0 24 24"><path fill="#d0d0d0" d="M7.41,15.41L12,10.83L16.59,15.41L18,14L12,8L6,14L7.41,15.41Z"/></svg>
<svg class="ic" style="left:961px;top:855px;width:20px;height:20px;" viewBox="0 0 24 24"><path fill="#d0d0d0" d="M7.41,8.58L12,13.17L16.59,8.58L18,10L12,16L6,10L7.41,8.58Z"/></svg>
<svg class="ic" style="left:961px;top:890px;width:20px;height:20px;" viewBox="0 0 24 24"><path fill="#d0d0d0" d="M7.41,15.41L12,10.83L16.59,15.41L18,14L12,8L6,14L7.41,15.41Z"/></svg>
<svg class="ic" style="left:961px;top:919px;width:20px;height:20px;" viewBox="0 0 24 24"><path fill="#d0d0d0" d="M7.41,8.58L12,13.17L16.59,8.58L18,10L12,16L6,10L7.41,8.58Z"/></svg>
<svg class="ic" style="left:1291px;top:826px;width:20px;height:20px;" viewBox="0 0 24 24"><path fill="#d0d0d0" d="M7.41,15.41L12,10.83L16.59,15.41L18,14L12,8L6,14L7.41,15.41Z"/></svg>
<svg class="ic" style="left:1291px;top:855px;width:20px;height:20px;" viewBox="0 0 24 24"><path fill="#d0d0d0" d="M7.41,8.58L12,13.17L16.59,8.58L18,10L12,16L6,10L7.41,8.58Z"/></svg>
<svg class="ic" style="left:1291px;top:890px;width:20px;height:20px;" viewBox="0 0 24 24"><path fill="#d0d0d0" d="M7.41,15.41L12,10.83L16.59,15.41L18,14L12,8L6,14L7.41,15.41Z"/></svg>
<svg class="ic" style="left:1291px;top:919px;width:20px;height:20px;" viewBox="0 0 24 24"><path fill="#d0d0d0" d="M7.41,8.58L12,13.17L16.59,8.58L18,10L12,16L6,10L7.41,8.58Z"/></svg>
<div class="b" style="left:1351px;top:159px;width:530px;height:420px;background:#1e1e1e;border-radius:4px;box-shadow:0 1px 3px rgba(0,0,0,.28)"></div>
<div class="b" style="left:1351px;top:159px;width:530px;height:48px;background:#2a2a2a;border-radius:4px 4px 0 0"></div>
<svg class="ic" style="left:1367px;top:171px;width:24px;height:24px;" viewBox="0 0 24 24"><path fill="#fff" d="M13,19V16H21V19H13M8.5,13L2.47,7H6.71L11.67,11.95C12.25,12.54 12.25,13.5 11.67,14.07L6.74,19H2.5L8.5,13Z"/></svg>
<div class="t" style="top:168px;font-size:20px;line-height:30px;color:#fff;-webkit-text-stroke:0.35px #fff;left:1399px;">Console</div>
<svg class="ic" style="left:1705px;top:175px;width:16px;height:16px;" viewBox="0 0 24 24"><path fill="#fff" d="M9,3V4H4V6H5V19A2,2 0 0,0 7,21H17A2,2 0 0,0 19,19V6H20V4H15V3H9M9,8H11V17H9V8M13,8H15V17H13V8Z"/></svg>
<svg class="ic" style="left:1753px;top:175px;width:16px;height:16px;" viewBox="0 0 24 24"><path fill="#fff" d="M10,19H13V22H10V19M12,2C17.35,2.22 19.68,7.62 16.5,11.67C15.67,12.67 14.33,13.33 13.67,14.17C13,15 13,16 13,17H10C10,15.33 10,13.92 10.67,12.92C11.33,11.92 12.67,11.33 13.5,10.67C15.92,8.43 15.32,5.26 12,5A3,3 0 0,0 9,8H6A6,6 0 0,1 12,2Z"/></svg>
<svg class="ic" style="left:1801px;top:175px;width:16px;height:16px;" viewBox="0 0 24 24"><path fill="#fff" d="M12,15.5A3.5,3.5 0 0,1 8.5,12A3.5,3.5 0 0,1 12,8.5A3.5,3.5 0 0,1 15.5,12A3.5,3.5 0 0,1 12,15.5M19.43,12.97C19.47,12.65 19.5,12.33 19.5,12C19.5,11.67 19.47,11.34 19.43,11L21.54,9.37C21.73,9.22 21.78,8.95 21.66,8.73L19.66,5.27C19.54,5.05 19.27,4.96 19.05,5.05L16.56,6.05C16.04,5.66 15.5,5.32 14.87,5.07L14.5,2.42C14.46,2.18 14.25,2 14,2H10C9.75,2 9.54,2.18 9.5,2.42L9.13,5.07C8.5,5.32 7.96,5.66 7.44,6.05L4.95,5.05C4.73,4.96 4.46,5.05 4.34,5.27L2.34,8.73C2.21,8.95 2.27,9.22 2.46,9.37L4.57,11C4.53,11.34 4.5,11.67 4.5,12C4.5,12.33 4.53,12.65 4.57,12.97L2.46,14.63C2.27,14.78 2.21,15.05 2.34,15.27L4.34,18.73C4.46,18.95 4.73,19.03 4.95,18.95L7.44,17.94C7.96,18.34 8.5,18.68 9.13,18.93L9.5,21.58C9.54,21.82 9.75,22 10,22H14C14.25,22 14.46,21.82 14.5,21.58L14.87,18.93C15.5,18.67 16.04,18.34 16.56,17.94L19.05,18.95C19.27,19.03 19.54,18.95 19.66,18.73L21.66,15.27C21.78,15.05 21.73,14.78 21.54,14.63L19.43,12.97Z"/></svg>
<svg class="ic" style="left:1845px;top:171px;width:24px;height:24px;" viewBox="0 0 24 24"><path fill="#fff" d="M7.41,8.58L12,13.17L16.59,8.58L18,10L12,16L6,10L7.41,8.58Z"/></svg>
<svg class="ic" style="left:1367px;top:231px;width:24px;height:24px;" viewBox="0 0 24 24"><path fill="#fff" d="M5.59,7.41L7,6L13,12L7,18L5.59,16.59L10.17,12L5.59,7.41M11.59,7.41L13,6L19,12L13,18L11.59,16.59L16.17,12L11.59,7.41Z"/></svg>
<div class="b" style="left:1400px;top:223px;width:465px;height:40px;border:1px solid #5c5c5c;border-radius:4px"></div>
<div class="t" style="top:233.5px;font-size:16px;line-height:24px;color:#adadad;-webkit-text-stroke:0.22px #adadad;font-family:'Liberation Mono',monospace;left:1412px;text-shadow:0 0 .5px #adadad;">Send code...</div>
<svg class="ic" style="left:1829px;top:231px;width:24px;height:24px;" viewBox="0 0 24 24"><path fill="#fff" d="M2,21L23,12L2,3V10L17,12L2,14V21Z"/></svg>
<div class="b" style="left:1351px;top:279px;width:530px;height:1px;background:#353535"></div>
<div class="t" style="top:291.5px;font-size:14px;line-height:21px;color:#fff;letter-spacing:-0.3px;left:1516px;width:200px;text-align:center;-webkit-text-stroke:.3px #fff;">Empty</div>
<div class="b" style="left:1351px;top:326px;width:530px;height:1px;background:#353535"></div>
</div>
</body></html>
